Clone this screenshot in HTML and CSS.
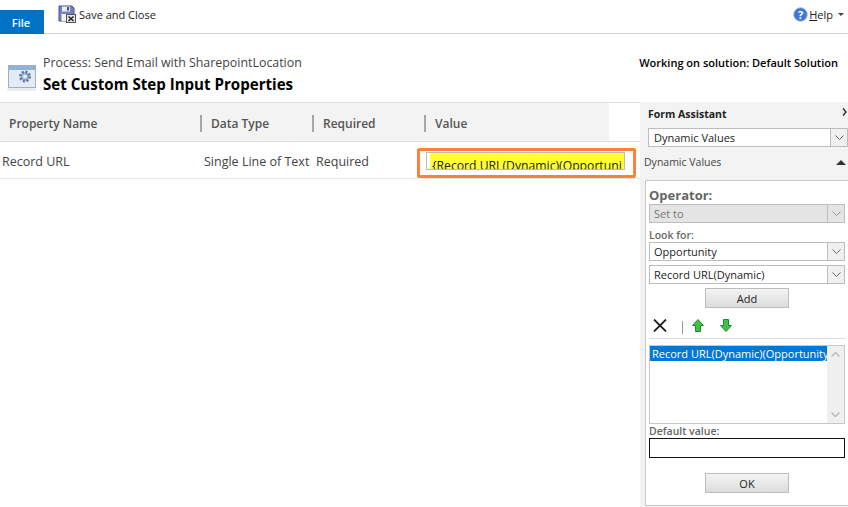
FILE: index.html
```html
<!DOCTYPE html>
<html lang="en">
<head>
    <meta charset="UTF-8">
    <title>Set Custom Step Input Properties</title>
    <link rel="stylesheet" href="styles.css">
</head>
<body>
    <div class="ribbon">
        <div class="file-tab">File</div>
        <div class="save-close">
            <svg width="18" height="18" viewBox="0 0 18 18">
                <path d="M1 1h13l2 2v13H1z" fill="#7484bd" stroke="#46507f"/>
                <rect x="4" y="1.500" width="8" height="5" fill="#e8ecf6"/>
                <rect x="9" y="2" width="2" height="3.500" fill="#46507f"/>
                <rect x="3.500" y="9" width="8" height="7" fill="#f4f4f4"/>
                <rect x="8.500" y="9.500" width="9" height="8" fill="#e6e6e6" stroke="#555"/>
                <path d="M10.500 11.500l5 4.500M15.500 11.500l-5 4.500" stroke="#222" stroke-width="1.500"/>
            </svg>
            <span>Save and Close</span>
        </div>
        <div class="help">
            <svg width="15" height="15" viewBox="0 0 15 15">
                <circle cx="7.500" cy="7.500" r="6.800" fill="#3f77cf" stroke="#9dbdea"/>
                <text x="7.500" y="11.500" text-anchor="middle" class="help-mark">?</text>
            </svg>
            <span><u>H</u>elp</span>
            <i class="caret"></i>
        </div>
    </div>

    <div class="page-head">
        <svg class="step-icon" width="30" height="28" viewBox="0 0 30 28">
            <rect x="1.500" y="1.500" width="27" height="22" fill="#e3ebf5" stroke="#9fb0c4"/>
            <rect x="2" y="2" width="26" height="4" fill="#8fb2da"/>
            <circle cx="18" cy="12.500" r="4.500" fill="#a9bbd5" stroke="#5a79a8" stroke-width="3" stroke-dasharray="2 1.500"/>
            <circle cx="18" cy="12.500" r="1.800" fill="#eef3fa"/>
            <path d="M0 25.500h29" stroke="#e2e5e8" stroke-width="2"/>
        </svg>
        <div class="titles">
            <div class="process-name">Process: Send Email with SharepointLocation</div>
            <h1>Set Custom Step Input Properties</h1>
        </div>
        <div class="solution">Working on solution: Default Solution</div>
    </div>

    <div class="content">
        <div class="grid-area">
            <div class="grid-head">
                <div class="col col-name">Property Name</div>
                <div class="col col-type">Data Type</div>
                <div class="col col-req">Required</div>
                <div class="col col-value">Value</div>
            </div>
            <div class="grid-row">
                <div class="cell-name">Record URL</div>
                <div class="cell-type">Single Line of Text</div>
                <div class="cell-req">Required</div>
                <div class="cell-value">
                    <div class="value-input"><div class="value-text">{Record URL(Dynamic)(Opportuni</div></div>
                </div>
            </div>
        </div>

        <div class="assistant">
            <div class="assistant-title">
                <span>Form Assistant</span>
                <svg class="chev" width="5" height="8" viewBox="0 0 5 8"><path d="M1 .500l3 3.500-3 3.500" fill="none" stroke="#333" stroke-width="1.500"/></svg>
            </div>
            <div class="select select-top">
                <span>Dynamic Values</span>
                <i class="arrow"><svg width="9" height="5" viewBox="0 0 9 5"><path d="M.5.500l4 4 4-4" fill="none" stroke="#666"/></svg></i>
            </div>
            <div class="section-bar">
                <span>Dynamic Values</span>
                <i class="up-caret"></i>
            </div>
            <div class="assistant-box">
                <div class="operator">Operator:</div>
                <div class="select disabled">
                    <span>Set to</span>
                    <i class="arrow"><svg width="9" height="5" viewBox="0 0 9 5"><path d="M.5.500l4 4 4-4" fill="none" stroke="#999"/></svg></i>
                </div>
                <div class="small-label">Look for:</div>
                <div class="select">
                    <span>Opportunity</span>
                    <i class="arrow"><svg width="9" height="5" viewBox="0 0 9 5"><path d="M.5.500l4 4 4-4" fill="none" stroke="#666"/></svg></i>
                </div>
                <div class="select select-next">
                    <span>Record URL(Dynamic)</span>
                    <i class="arrow"><svg width="9" height="5" viewBox="0 0 9 5"><path d="M.5.500l4 4 4-4" fill="none" stroke="#666"/></svg></i>
                </div>
                <div class="btn-line"><div class="btn">Add</div></div>
                <div class="tools">
                    <svg width="14" height="13" viewBox="0 0 14 13"><path d="M1 .500l12 12M13 .500l-12 12" stroke="#222" stroke-width="1.800"/></svg>
                    <i class="tool-sep"></i>
                    <svg class="tool-up" width="12" height="13" viewBox="0 0 12 13"><path d="M6 .500l5.500 6H8.500v6h-5v-6H.5z" fill="#3fc04a" stroke="#1b8a2a"/></svg>
                    <svg class="tool-down" width="12" height="13" viewBox="0 0 12 13"><path d="M6 12.500l5.500-6H8.500v-6h-5v6H.5z" fill="#3fc04a" stroke="#1b8a2a"/></svg>
                </div>
                <div class="listbox">
                    <div class="list-main"><div class="list-item">Record URL(Dynamic)(Opportunity</div></div>
                    <div class="list-scroll">
                        <svg width="9" height="5" viewBox="0 0 9 5"><path d="M.5 4.500l4-4 4 4" fill="none" stroke="#bbb" stroke-width="1.500"/></svg>
                        <svg width="9" height="5" viewBox="0 0 9 5"><path d="M.5.500l4 4 4-4" fill="none" stroke="#bbb" stroke-width="1.500"/></svg>
                    </div>
                </div>
                <div class="small-label default-label">Default value:</div>
                <div class="default-input"></div>
                <div class="btn-line ok-line"><div class="btn">OK</div></div>
            </div>
        </div>
    </div>
</body>
</html>
```

FILE: styles.css
```css
* {
    box-sizing: border-box;
}

html,
body {
    height: 100%;
}

body {
    margin: 0;
    overflow: hidden;
    background-color: white;
    color: #222;
    font-family: "Open Sans", "Noto Sans", sans-serif;
    font-size: 12px;
}

.ribbon {
    display: flex;
    align-items: flex-start;
    height: 34px;
    border-bottom: 1px solid #d6d6d6;
}

.file-tab {
    width: 44px;
    height: 24px;
    margin-top: 10px;
    padding-right: 2px;
    background-color: #0072c6;
    color: white;
    font-size: 11px;
    font-weight: 600;
    line-height: 26px;
    text-align: center;
}

.save-close {
    display: flex;
    align-items: center;
    gap: 3px;
    margin-top: 5px;
    margin-left: 14px;
    font-size: 11px;
    color: #222;
}

.help {
    display: flex;
    align-items: center;
    gap: 1px;
    margin-top: 7px;
    margin-left: auto;
    margin-right: 4px;
    font-size: 11px;
}

.help-mark {
    fill: white;
    font-size: 11px;
    font-weight: 700;
}

.caret {
    width: 0;
    height: 0;
    margin-left: 4px;
    border-left: 3px solid transparent;
    border-right: 3px solid transparent;
    border-top: 3px solid #444;
}

.page-head {
    display: flex;
    height: 68px;
}

.step-icon {
    margin-top: 30px;
    margin-left: 7px;
    flex: none;
}

.titles {
    margin-left: 6px;
    padding-top: 20px;
}

.process-name {
    font-size: 12.400px;
    line-height: 18px;
    color: #444;
}

h1 {
    margin: 0;
    margin-top: 2px;
    font-size: 15.100px;
    font-weight: 700;
    line-height: 20px;
    color: #000;
}

.solution {
    margin-left: auto;
    margin-right: 10px;
    padding-top: 21px;
    font-size: 11px;
    font-weight: 600;
    color: #000;
}

.content {
    display: flex;
    height: 405px;
}

.grid-area {
    width: 640px;
    flex: none;
    border-top: 1px solid #dcdcdc;
}

.grid-head {
    display: flex;
    width: 609px;
    height: 38px;
    background-color: #f3f3f3;
    font-weight: 600;
    color: #555;
}

.col {
    display: flex;
    align-items: center;
    padding-top: 2px;
    font-size: 12px;
}

.col-name {
    width: 200px;
    padding-left: 9px;
}

.col-type {
    width: 112px;
}

.col-req {
    width: 112px;
}

.col-value {
    flex: 1;
}

.col-type::before,
.col-req::before,
.col-value::before {
    content: "";
    width: 2px;
    height: 17px;
    margin-right: 9px;
    background-color: #a6a6a6;
}

.grid-row {
    display: flex;
    align-items: flex-start;
    height: 38px;
    border-top: 1px solid #dcdcdc;
    border-bottom: 1px solid #e6e6e6;
    font-size: 12.500px;
    line-height: 40px;
    color: #444;
}

.cell-name {
    width: 204px;
    padding-left: 2px;
}

.cell-type {
    width: 112px;
    white-space: nowrap;
}

.cell-req {
    width: 101px;
}

.cell-value {
    width: 219px;
    height: 30px;
    margin-top: 6px;
    padding: 1px 8px 5px 6px;
    border: 3px solid #ff7f3f;
    border-radius: 2px;
}

.value-input {
    height: 18px;
    overflow: hidden;
    padding-left: 3px;
    background-color: white;
    border: 1px solid #bbb;
}

.value-text {
    height: 18px;
    padding-left: 2px;
    background: linear-gradient(to bottom, #ffff33, #ffff33 85%, #b8e986);
    color: #222;
    font-size: 12.200px;
    line-height: 25px;
    white-space: nowrap;
}

.assistant {
    width: 208px;
    min-width: 0;
    flex: none;
    padding-top: 1px;
    background-color: #f3f3f3;
}

.assistant-title {
    display: flex;
    justify-content: space-between;
    height: 25px;
    padding-left: 8px;
    padding-right: 1px;
    font-size: 10.500px;
    font-weight: 700;
    line-height: 22px;
}

.chev {
    margin-top: 5px;
}

.select {
    display: flex;
    align-items: center;
    justify-content: space-between;
    height: 19px;
    background-color: white;
    border: 1px solid #bdbdbd;
    font-size: 11px;
    padding-left: 4px;
}

.select-top {
    margin-left: 8px;
    padding-left: 5px;
}

.arrow {
    display: flex;
    align-items: center;
    justify-content: center;
    width: 17px;
    height: 17px;
    background-color: #f0f0f0;
    border-left: 1px solid #bdbdbd;
}

.section-bar {
    display: flex;
    align-items: center;
    justify-content: space-between;
    height: 24px;
    margin-top: 3px;
    padding-left: 4px;
    padding-right: 2px;
    font-size: 10.500px;
    color: #444;
}

.up-caret {
    width: 0;
    height: 0;
    border-left: 5px solid transparent;
    border-right: 5px solid transparent;
    border-bottom: 5px solid #333;
}

.assistant-box {
    height: 326px;
    margin-top: 6px;
    margin-left: 5px;
    padding: 6px 3px 0 3px;
    background-color: white;
    border: 1px solid #c8c8c8;
    border-right: 0;
}

.operator {
    font-size: 13px;
    font-weight: 700;
    line-height: 17px;
    color: #666;
}

.disabled {
    background-color: #e4e4e4;
    color: #777;
}

.disabled .arrow {
    background-color: #e4e4e4;
}

.small-label {
    margin-top: 5px;
    font-size: 10.500px;
    font-weight: 600;
    line-height: 14px;
    color: #666;
}

.select-next {
    margin-top: 4px;
}

.btn-line {
    display: flex;
    justify-content: center;
    margin-top: 4px;
}

.btn {
    width: 84px;
    height: 20px;
    background: linear-gradient(to bottom, #f4f4f4, #dcdcdc);
    border: 1px solid #bdbdbd;
    font-size: 11px;
    line-height: 19px;
    text-align: center;
    color: #222;
}

.tools {
    display: flex;
    align-items: center;
    height: 27px;
    margin-top: 4px;
    padding-left: 4px;
    border-bottom: 1px solid #dcdcdc;
}

.tool-sep {
    width: 1px;
    height: 13px;
    margin-top: 4px;
    margin-left: 15px;
    background-color: #999;
}

.tool-up {
    margin-left: 9px;
}

.tool-down {
    margin-left: 16px;
}

.listbox {
    display: flex;
    height: 79px;
    margin-top: 6px;
    border: 1px solid #c8c8c8;
}

.list-main {
    flex: 1;
    min-width: 0;
    overflow: hidden;
}

.list-item {
    height: 15px;
    padding-left: 2px;
    overflow: hidden;
    background-color: #0078d7;
    color: white;
    font-size: 11px;
    line-height: 15px;
    white-space: nowrap;
}

.list-scroll {
    display: flex;
    flex-direction: column;
    align-items: center;
    justify-content: space-between;
    width: 17px;
    padding: 6px 0;
    background-color: #f0f0f0;
}

.default-label {
    margin-top: 0;
}

.default-input {
    height: 20px;
    margin-top: 0;
    background-color: white;
    border: 1px solid #111;
}

.ok-line {
    margin-top: 15px;
}
```
